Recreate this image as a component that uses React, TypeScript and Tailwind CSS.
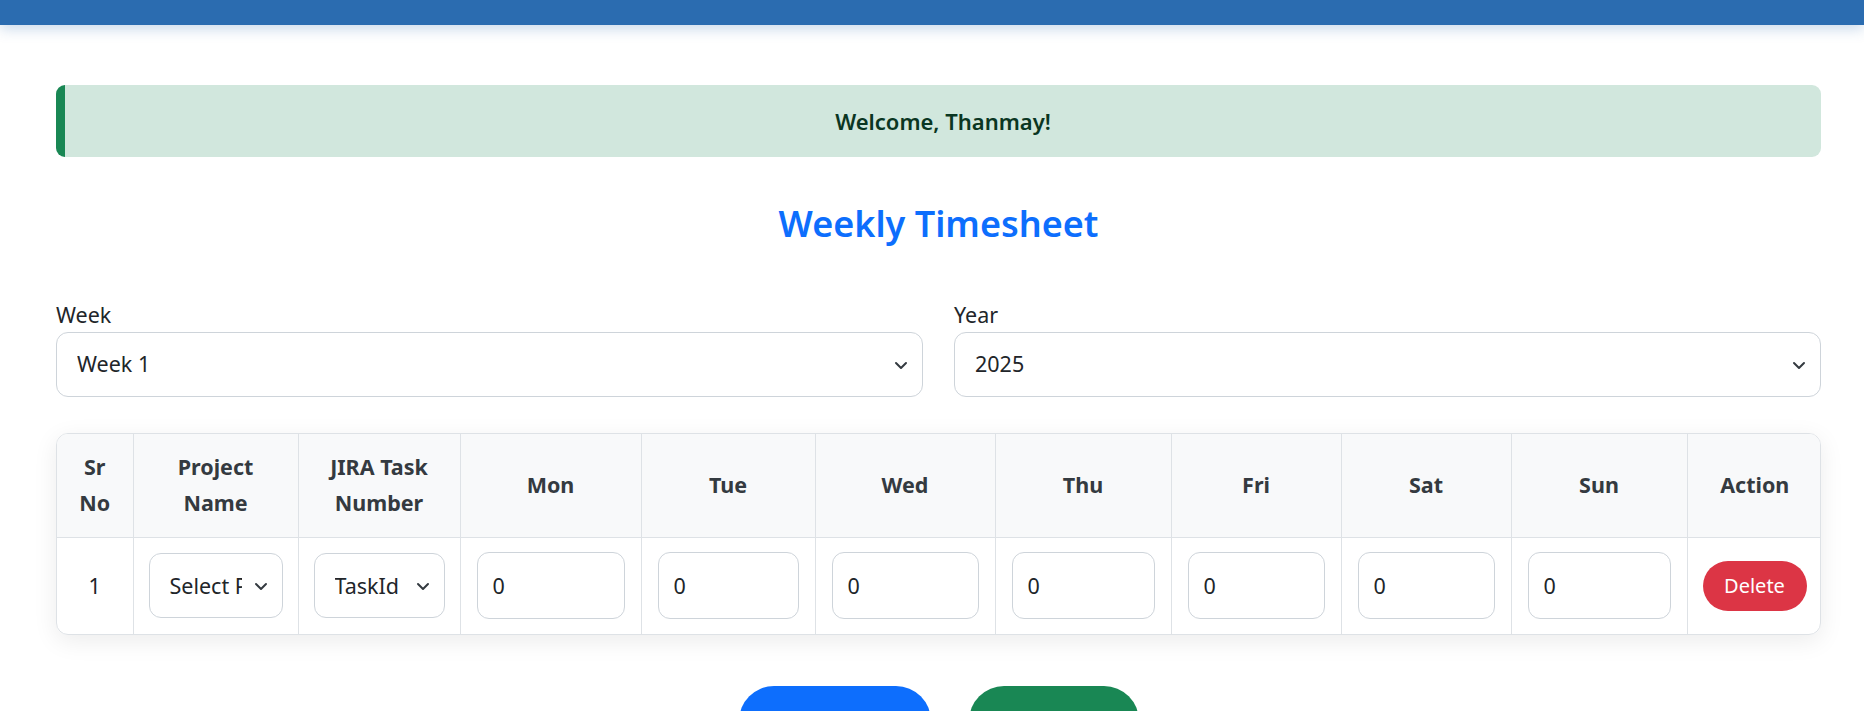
import { useState } from 'react'

const days = ['Mon', 'Tue', 'Wed', 'Thu', 'Fri', 'Sat', 'Sun']
const colWidths = [76, 165, 162, 181, 174, 180, 176, 170, 170, 176, 135]

function Chevron() {
  return (
    <svg
      viewBox="0 0 16 16"
      className="pointer-events-none absolute right-[14px] top-1/2 h-[16px] w-[16px] -translate-y-1/2"
      fill="none"
      stroke="#343a40"
      strokeWidth="2"
      strokeLinecap="round"
      strokeLinejoin="round"
    >
      <path d="M3 6l5 5 5-5" />
    </svg>
  )
}

function Select({ value, options, className }: { value: string; options: string[]; className?: string }) {
  return (
    <div className={`relative ${className ?? ''}`}>
      <select
        defaultValue={value}
        className="h-full w-full appearance-none rounded-[12px] border border-[#ced4da] bg-white pl-[20px] pr-[40px] text-[#212529] outline-none"
      >
        {options.map((o) => (
          <option key={o}>{o}</option>
        ))}
      </select>
      <Chevron />
    </div>
  )
}

export default function App() {
  const [hours] = useState(days.map(() => '0'))

  return (
    <div className="min-h-screen bg-white font-['Noto_Sans',sans-serif] text-[21.5px] text-[#212529]">
      <div className="h-[25px] bg-[#2b6cb0] shadow-[0_4px_14px_rgba(43,108,176,0.25)]" />

      <div className="pl-[56px] pr-[43px] pt-[60px]">
        <div className="flex h-[72px] items-center justify-center rounded-[9px] border-l-[9px] border-[#198754] bg-[#d1e7dd] text-[22px] font-semibold text-[#0a3622]">
          Welcome, Thanmay!
        </div>

        <h2 className="mt-[44px] text-center text-[36px] leading-[46px] font-semibold text-[#0d6efd]">
          Weekly Timesheet
        </h2>

        <div className="mt-[53px] grid grid-cols-2 gap-x-[31px]">
          <div>
            <label className="block leading-[30px]">Week</label>
            <Select value="Week 1" options={['Week 1', 'Week 2', 'Week 3']} className="mt-[2px] h-[65px]" />
          </div>
          <div>
            <label className="block leading-[30px]">Year</label>
            <Select value="2025" options={['2024', '2025', '2026']} className="mt-[2px] h-[65px]" />
          </div>
        </div>

        <div className="mt-[36px] overflow-hidden rounded-[12px] border border-[#dee2e6] shadow-[0_6px_24px_rgba(0,0,0,0.08)]">
          <table className="w-full table-fixed border-collapse">
            <colgroup>
              {colWidths.map((w, i) => (
                <col key={i} style={{ width: w }} />
              ))}
            </colgroup>
            <thead>
              <tr className="h-[103px] bg-[#f8f9fa] text-[21.5px] leading-[36px] font-semibold text-[#343a40]">
                <th className="border-r border-b border-[#dee2e6] px-[16px]">Sr No</th>
                <th className="border-r border-b border-[#dee2e6] px-[16px]">Project Name</th>
                <th className="border-r border-b border-[#dee2e6] px-[16px]">JIRA Task Number</th>
                {days.map((d) => (
                  <th key={d} className="border-r border-b border-[#dee2e6] px-[16px]">
                    {d}
                  </th>
                ))}
                <th className="border-b border-[#dee2e6] px-[16px]">Action</th>
              </tr>
            </thead>
            <tbody>
              <tr className="h-[97px]">
                <td className="border-r border-[#dee2e6] text-center">1</td>
                <td className="border-r border-[#dee2e6] px-[15px]">
                  <Select value="Select Project" options={['Select Project', 'Alpha', 'Beta']} className="h-[65px]" />
                </td>
                <td className="border-r border-[#dee2e6] px-[15px]">
                  <Select value="TaskId" options={['TaskId', 'JIRA-101', 'JIRA-102']} className="h-[65px]" />
                </td>
                {hours.map((h, i) => (
                  <td key={i} className="border-r border-[#dee2e6] px-[16px]">
                    <input
                      defaultValue={h}
                      className="h-[67px] w-full rounded-[12px] border border-[#ced4da] bg-white px-[15px] text-[#212529] outline-none"
                    />
                  </td>
                ))}
                <td className="px-[15px]">
                  <button className="h-[50px] w-[104px] rounded-full bg-[#dc3545] text-[20px] text-white">Delete</button>
                </td>
              </tr>
            </tbody>
          </table>
        </div>

        <div className="mt-[51px] flex justify-center gap-[38px] pb-[40px]">
          <button aria-label="Add Row" className="h-[70px] w-[192px] rounded-[36px] bg-[#0d6efd]" />
          <button aria-label="Submit" className="h-[70px] w-[170px] rounded-[36px] bg-[#198754]" />
        </div>
      </div>
    </div>
  )
}
